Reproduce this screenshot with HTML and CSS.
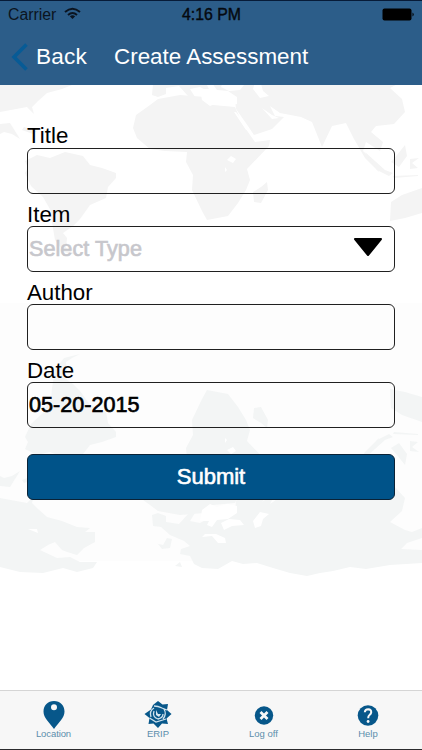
FILE: index.html
```html
<!DOCTYPE html>
<html lang="en">
<head>
<meta charset="utf-8">
<title>Create Assessment</title>
<link rel="stylesheet" href="styles.css">
</head>
<body>
<div class="screen">
  <header class="header">
    <div class="status">
      <div class="carrier"><span>Carrier</span>
        <svg width="17" height="13" viewBox="0 0 17 13" fill="none" stroke="#0b1420" stroke-width="2"><path d="M1 5Q8.500-1.500 16 5M4 8Q8.500 4 13 8"/><path d="M5.800 9.300Q8.500 7 11.200 9.300L8.500 12Z" fill="#0b1420" stroke="none"/></svg>
      </div>
      <span class="time">4:16 PM</span>
      <svg class="battery" width="33" height="13" viewBox="0 0 33 13"><rect x=".5" y=".5" width="29" height="12" rx="2"/><path d="M30.500 4.500Q33 6.500 30.500 8.500Z"/></svg>
    </div>
    <nav class="nav">
      <svg width="17" height="28" viewBox="0 0 17 28" fill="none" stroke="#075b96" stroke-width="3.600"><path d="M15.500 1.500L3 14L15.500 26.500"/></svg>
      <span class="back">Back</span>
      <h1>Create Assessment</h1>
    </nav>
  </header>

  <main class="content">
    <svg class="map" width="422" height="605" viewBox="0 0 422 605" aria-hidden="true">
      <defs>
        <g id="world">
          <path d="M0 43L20 38L43 37L63 42L77 38L93 42L97 48L80 48L70 53L57 52L40 60L48 65L55 68L62 60L67 58L77 55L84 62L95 68L95 78L85 78L90 82L77 83L62 89L47 93L38 101L32 107L34 114L27 107L0 112Z"/>
          <path d="M0 124L10 123L20 139L12 134L4 132L0 134ZM24 127L37 131L33 134L22 130Z"/>
          <path d="M25 161L37 155L50 158L65 152L83 156L90 165L102 168L116 173L116 178L108 187L106 198L90 205L80 219L73 226L63 233L67 238L66 248L72 252L80 256L64 252L55 240L52 222L51 211L43 197L31 186L25 173L28 168Z"/>
          <path d="M150 105L158 99L180 95L205 97L213 105L235 107L243 125L255 142L270 140L269 146L247 169L250 180L246 190L238 203L228 216L207 220L202 211L192 190L193 175L186 162L187 152L165 151L150 149L137 138L133 128L136 115Z"/>
          <path d="M267 182L268 190L261 203L254 202L253 192L261 187Z"/>
          <path d="M152 95L153 84L161 83L170 75L184 69L190 64L181 61L180 56L190 54L194 46L202 42L218 41L232 49L243 46L257 47L273 42L290 37L307 34L320 37L333 39L350 43L366 41L390 45L422 47L422 60L401 61L407 67L422 72L422 82L412 78L405 80L390 88L402 99L405 112L394 124L376 126L371 132L383 142L380 151L366 142L363 151L376 163L379 172L365 158L354 139L346 123L332 126L322 147L312 122L301 117L280 113L270 106L275 116L284 117L272 129L254 135L248 126L236 109L235 99L221 95L211 93L200 87L190 89L195 97L188 96L179 86L166 88L166 94L158 97Z"/>
          <path d="M154 67L163 65L167 72L172 71L170 62L162 61L158 66ZM175 44L182 43L180 48ZM365 152L385 170L393 173L389 176L377 170ZM397 155L405 145L407 156L399 167L391 162ZM410 159L419 158L412 163L418 168L410 169ZM393 176L418 175L418 176L394 178ZM391 202L402 195L422 188L422 213L405 218L390 221Z"/>
          <path class="water" d="M200 89L209 89L207 85L212 83L217 90L228 91L237 97L237 104L227 106L217 103L210 106L202 100ZM221 87L224 80L232 84L244 85L240 90L229 91ZM255 82L261 84L263 91L269 96L260 98L253 89ZM202 73L212 74L218 67L226 67L225 72L216 76L205 76ZM231 156L236 159L233 163L227 160ZM225 167L227 170L225 172ZM236 112L249 129L246 130L234 112ZM28 81L38 77L37 81Z"/>
          <path class="water" d="M262 108L272 115L279 118L272 119Z"/>
        </g>
      </defs>
      <rect class="shade" y="303" width="422" height="258"/>
      <use href="#world" class="land"/>
      <use href="#world" class="land lower" transform="translate(0 610) scale(1 -1)"/>
    </svg>
    <form class="form">
      <label for="title">Title</label>
      <div class="field" id="title"></div>
      <label for="item">Item</label>
      <div class="field select" id="item"><span class="placeholder">Select Type</span>
        <svg width="30" height="19" viewBox="0 0 30 19"><path d="M2 1H28L15 17Z" stroke="#000" stroke-width="2" stroke-linejoin="round"/></svg>
      </div>
      <label for="author">Author</label>
      <div class="field" id="author"></div>
      <label for="date">Date</label>
      <div class="field" id="date"><span>05-20-2015</span></div>
      <button class="submit" type="button">Submit</button>
    </form>
  </main>

  <footer class="tabs">
    <div class="tab"><svg width="28" height="30" viewBox="0 0 28 30"><path fill-rule="evenodd" d="M14 1C7.800 1 3.500 5.500 3.500 11.500C3.500 18 9 22 14 29C19 22 24.500 18 24.500 11.500C24.500 5.500 20.200 1 14 1ZM14 4.200A3 3 0 1 1 14 10.200A3 3 0 1 1 14 4.200Z"/></svg><span class="wide">Location</span></div>
    <div class="tab"><svg width="28" height="30" viewBox="0 0 28 30"><path d="M14 1L18.500 4.500L24 4L23 10L27.500 14L22.500 18.500L24 24L18 23.500L14 28L9.500 23.500L4.500 24L5.500 18L.5 14L7 9.500L9 5Z"/><g fill="none" stroke="#d0e2ec" stroke-width="1.300"><path d="M10 6Q14 6 18 8L23 10M20 9Q23 14 19 19M22 19L12 22L5.500 18M7 17Q5 11 10 8"/><path d="M10 11Q8 17 14 19Q19 18 19 14"/></g><path d="M12 10L14 14L17 14L15 17L12 15Z" fill="#d8e7ef"/></svg><span>ERIP</span></div>
    <div class="tab"><svg width="28" height="30" viewBox="0 0 28 30"><circle cx="14" cy="15.500" r="9.200"/><path d="M10.500 12L17.500 19M17.500 12L10.500 19" stroke="#f7f7f7" stroke-width="2.800"/></svg><span>Log off</span></div>
    <div class="tab"><svg width="28" height="30" viewBox="0 0 28 30"><circle cx="14" cy="15.500" r="10.300"/><path d="M10.800 12.300Q11 9.300 14.200 9.300Q17.500 9.500 17.200 12.500Q17 14 15.300 15.200Q14.200 16 14.200 18.300" fill="none" stroke="#f7f7f7" stroke-width="2"/><circle cx="14.100" cy="21.500" r="1.400" fill="#f7f7f7"/></svg><span>Help</span></div>
  </footer>
</div>
</body>
</html>
```
FILE: styles.css
```css
* { box-sizing: border-box; }
body { margin: 0; font-family: "Liberation Sans", Arial, sans-serif; color: #000; }
.screen { height: 750px; display: flex; flex-direction: column; background: #fff; border-bottom: 1px solid #2b2b2d; overflow: hidden; }
.header { height: 85px; flex: none; background: #2c5d89; border-top: 1px solid #071b38; }
.status { height: 27px; display: grid; grid-template-columns: 1fr auto 1fr; align-items: center; padding: 0 7px 0 8px; font-size: 15.8px; color: #0b1420; }
.carrier { display: flex; align-items: center; gap: 8px; }
.carrier svg { margin-top: -3px; }
.time { -webkit-text-stroke: .4px #05090f; color: #05090f; }
.battery { justify-self: end; }
.nav { height: 58px; display: flex; align-items: center; padding-left: 11px; color: #fff; font-size: 22.6px; }
.back { margin-left: 8px; letter-spacing: .2px; }
h1 { margin: 0 0 0 27px; font-size: 22.4px; font-weight: 400; }
.content { position: relative; height: 605px; flex: none; padding: 38px 27px 0; }
.map { position: absolute; left: 0; top: -85px; z-index: 0; height: 605px; clip-path: inset(85px 0 0 0); }
.land { fill: #f4f4f4; }
.lower { fill: #f3f5f5; }
.water { fill: #fff; }
.shade { fill: #fdfdfd; }
.form { position: relative; display: flex; flex-direction: column; }
label { height: 25px; line-height: 28px; font-size: 22.3px; }
label:first-child { line-height: 26px; }
.field { height: 46px; border: 1.5px solid #202020; border-radius: 6px; display: flex; align-items: center; padding-left: 1px; margin-bottom: 7px; font-size: 21.6px; }
.field span { -webkit-text-stroke: .65px currentColor; }
.select { justify-content: space-between; padding-right: 11px; }
.select svg { margin-top: -3px; }
.field .placeholder { color: #c7c7cc; letter-spacing: .05px; }
.submit { height: 46px; margin: 19px 0 0; border: 1.5px solid #0a2236; border-radius: 6px; background: #005389; color: #fff; font: 22px "Liberation Sans", Arial, sans-serif; -webkit-text-stroke: .6px #fff; }
.tabs { height: 59px; flex: none; display: grid; grid-template-columns: 107px 102px 109px 100px; background: #f7f7f7; border-top: 1px solid #d5d5d5; }
.tab { display: flex; flex-direction: column; align-items: center; padding-top: 9px; font-size: 9.5px; line-height: 10px; color: #5c8eac; }
.tab svg { fill: #07578a; flex: none; margin-bottom: -1px; }
.wide { letter-spacing: -.1px; }
```
